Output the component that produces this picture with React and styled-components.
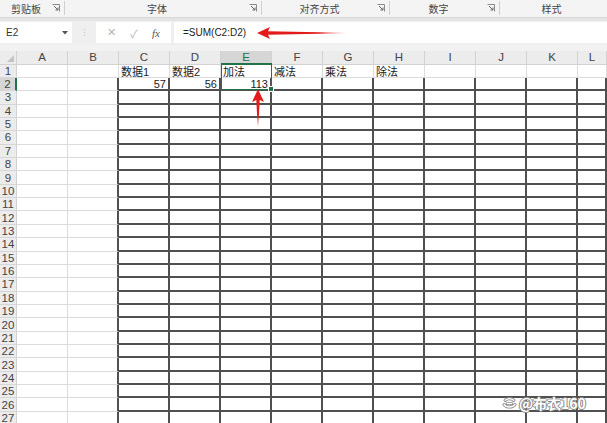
import React from "react";
import styled, { createGlobalStyle } from "styled-components";

const GlobalStyle = createGlobalStyle`
  html, body { margin: 0; padding: 0; background: #fff; }
  body { font-family: "Liberation Sans", "Noto Sans CJK SC", sans-serif; overflow: hidden; }
`;

const COLS = ["A", "B", "C", "D", "E", "F", "G", "H", "I", "J", "K", "L"];
const ROWS = 27;
const ROW_H = 13.37;

const groups = [
  { label: "剪贴板", w: 65 },
  { label: "字体", w: 197 },
  { label: "对齐方式", w: 128 },
  { label: "数字", w: 110 },
  { label: "样式", w: 107, last: true },
];

const data = {
  "C1": "数据1", "D1": "数据2", "E1": "加法", "F1": "减法", "G1": "乘法", "H1": "除法",
  "C2": "57", "D2": "56", "E2": "113",
};

const Page = styled.div`
  position: relative;
  width: 607px;
  height: 423px;
  overflow: hidden;
  background: #fff;
`;

const Ribbon = styled.div`
  display: flex;
  height: 17px;
  background: #f4f4f4;
  border-bottom: 1px solid #d8d8d8;
`;

const Group = styled.div`
  width: ${(p) => p.$w}px;
  flex-shrink: 0;
  display: flex;
  align-items: center;
  padding-right: 4px;
  box-sizing: border-box;
  border-right: ${(p) => (p.$last ? "none" : "1px solid #cfcfcf")};
  margin: 1px 0 2px;
`;

const GroupLabel = styled.span`
  flex: 1;
  text-align: center;
  font-family: "Noto Sans CJK SC", sans-serif;
  font-size: 10px;
  color: #444;
`;

const Strip = styled.div`
  height: 3px;
  background: #e4e4e4;
`;

const FormulaBar = styled.div`
  display: flex;
  align-items: stretch;
  height: 21px;
  padding: 1px 0 2px;
  background: #efefef;
`;

const NameBox = styled.div`
  width: 72px;
  display: flex;
  align-items: center;
  justify-content: space-between;
  padding: 0 4px 0 6px;
  box-sizing: border-box;
  background: #fff;
  font-size: 10px;
  color: #333;
`;

const Grip = styled.div`
  width: 24px;
  display: flex;
  align-items: center;
  justify-content: center;
  color: #bdbdbd;
  font-size: 9px;
`;

const IconBox = styled.div`
  width: 75px;
  display: flex;
  align-items: center;
  justify-content: space-around;
  padding: 0 4px;
  box-sizing: border-box;
  background: #fff;
  color: #b5b5b5;
  font-size: 11px;
`;

const Fx = styled.span`
  font-family: "Liberation Serif", serif;
  font-style: italic;
  color: #555;
  font-size: 11px;
`;

const FormulaInput = styled.div`
  flex: 1;
  margin-left: 3px;
  display: flex;
  align-items: center;
  padding-left: 9px;
  background: #fff;
  font-size: 10px;
  color: #222;
`;

const Gap = styled.div`
  height: 6px;
  background: #f2f2f2;
`;

const Sheet = styled.div`
  position: relative;
  display: grid;
  grid-template-columns: 17px repeat(11, 51px) 1fr;
  grid-template-rows: 13.5px;
  grid-auto-rows: ${ROW_H}px;
`;

const Corner = styled.div`
  background: #ececec;
  border-right: 1px solid #d2d2d2;
  border-bottom: 1px solid #d2d2d2;
  box-sizing: border-box;
  position: relative;
  &::after {
    content: "";
    position: absolute;
    right: 2px;
    bottom: 2px;
    border-left: 7px solid transparent;
    border-bottom: 7px solid #c4c4c4;
  }
`;

const ColHead = styled.div`
  background: ${(p) => (p.$active ? "#d6d6d6" : "#ececec")};
  border-right: 1px solid #d2d2d2;
  border-bottom: ${(p) => (p.$active ? "2px solid #217346" : "1px solid #d2d2d2")};
  box-sizing: border-box;
  display: flex;
  align-items: center;
  justify-content: center;
  font-size: 11.5px;
  color: ${(p) => (p.$active ? "#217346" : "#444")};
`;

const RowHead = styled.div`
  background: ${(p) => (p.$active ? "#d6d6d6" : "#ececec")};
  border-right: ${(p) => (p.$active ? "2px solid #217346" : "1px solid #d2d2d2")};
  border-bottom: 1px solid #d6d6d6;
  box-sizing: border-box;
  display: flex;
  align-items: center;
  justify-content: center;
  font-size: 11.5px;
  color: #444;
`;

const Cell = styled.div`
  box-sizing: border-box;
  border-right: ${(p) => (p.$darkRight ? "2px solid #505050" : "1px solid #dcdcdc")};
  border-bottom: ${(p) => (p.$darkBottom ? "2px solid #505050" : "1px solid #dcdcdc")};
  display: flex;
  align-items: center;
  justify-content: ${(p) => (p.$num ? "flex-end" : "flex-start")};
  padding: 0 2px;
  font-family: "Liberation Sans", "Noto Sans CJK SC", sans-serif;
  font-size: 11px;
  color: #222;
  white-space: nowrap;
  overflow: hidden;
`;

const Selection = styled.div`
  position: absolute;
  left: 221px;
  top: 12px;
  width: 51px;
  height: 27px;
  border: 1.5px solid #217346;
  box-sizing: border-box;
  pointer-events: none;
  &::after {
    content: "";
    position: absolute;
    right: -3px;
    bottom: -3px;
    width: 4px;
    height: 4px;
    background: #217346;
    border: 1px solid #fff;
  }
`;

const Overlay = styled.svg`
  position: absolute;
  left: 0;
  top: 0;
  pointer-events: none;
`;

const Watermark = styled.div`
  position: absolute;
  left: 502px;
  top: 393px;
  display: flex;
  align-items: center;
  gap: 2px;
  font-family: "Noto Sans CJK SC", sans-serif;
  font-size: 14px;
  font-weight: 700;
  color: #fff;
  text-shadow: 1px 0 0 #8a8a8a, -1px 0 0 #8a8a8a, 0 1px 0 #8a8a8a, 0 -1px 0 #8a8a8a;
`;

function Launcher() {
  return (
    <svg width="8" height="8" viewBox="0 0 8 8">
      <path d="M0.5 0.5h7v7" fill="none" stroke="#8a8a8a" strokeWidth="1" />
      <path d="M2 2l4 4M3.5 6H6V3.5" fill="none" stroke="#666" strokeWidth="1" />
    </svg>
  );
}

export default function App() {
  const cells = [];
  for (let r = 1; r <= ROWS; r++) {
    cells.push(
      <RowHead key={`h${r}`} $active={r === 2}>
        {r}
      </RowHead>
    );
    COLS.forEach((c, i) => {
      const key = `${c}${r}`;
      const value = data[key];
      cells.push(
        <Cell
          key={key}
          $darkRight={r >= 2 && i >= 1}
          $darkBottom={r >= 2 && i >= 2}
          $num={value && /^\d+$/.test(value)}
        >
          {value}
        </Cell>
      );
    });
  }

  return (
    <Page>
      <GlobalStyle />
      <Ribbon>
        {groups.map((g) => (
          <Group key={g.label} $w={g.w} $last={g.last}>
            <GroupLabel>{g.label}</GroupLabel>
            {!g.last && <Launcher />}
          </Group>
        ))}
      </Ribbon>
      <Strip />
      <FormulaBar>
        <NameBox>
          <span>E2</span>
          <svg width="6" height="4" viewBox="0 0 6 4">
            <path d="M0 0h6L3 3.5z" fill="#555" />
          </svg>
        </NameBox>
        <Grip>⋮</Grip>
        <IconBox>
          <span>✕</span>
          <span>✓</span>
          <Fx>fx</Fx>
        </IconBox>
        <FormulaInput>=SUM(C2:D2)</FormulaInput>
      </FormulaBar>
      <Gap />
      <Sheet>
        <Corner />
        {COLS.map((c) => (
          <ColHead key={c} $active={c === "E"}>
            {c}
          </ColHead>
        ))}
        {cells}
        <Selection />
      </Sheet>
      <Overlay width="607" height="423" viewBox="0 0 607 423">
        <defs>
          <linearGradient id="fadeH" x1="0" y1="0" x2="1" y2="0">
            <stop offset="0" stopColor="#e31b1b" />
            <stop offset="0.7" stopColor="#e31b1b" />
            <stop offset="1" stopColor="#e31b1b" stopOpacity="0.1" />
          </linearGradient>
          <linearGradient id="fadeV" x1="0" y1="0" x2="0" y2="1">
            <stop offset="0" stopColor="#e31b1b" />
            <stop offset="0.7" stopColor="#e31b1b" />
            <stop offset="1" stopColor="#e31b1b" stopOpacity="0.15" />
          </linearGradient>
        </defs>
        <path d="M257 33 L270 27 L268 31.3 L345 32.7 L345 33.3 L268 34.7 L270 39 Z" fill="url(#fadeH)" />
        <path d="M258 89 L252 102 L256.3 100 L257.6 126 L258.4 126 L259.7 100 L264 102 Z" fill="url(#fadeV)" />
      </Overlay>
      <Watermark>
        <svg width="15" height="15" viewBox="0 0 14 14">
          <path d="M3 4c2-2 6-2 8 0M2 8c2 3 8 3 10 0M5 7h4" fill="none" stroke="#8a8a8a" strokeWidth="3" strokeLinecap="round" />
          <path d="M3 4c2-2 6-2 8 0M2 8c2 3 8 3 10 0M5 7h4" fill="none" stroke="#fff" strokeWidth="1.4" strokeLinecap="round" />
        </svg>
        <span>@布衣160</span>
      </Watermark>
    </Page>
  );
}
